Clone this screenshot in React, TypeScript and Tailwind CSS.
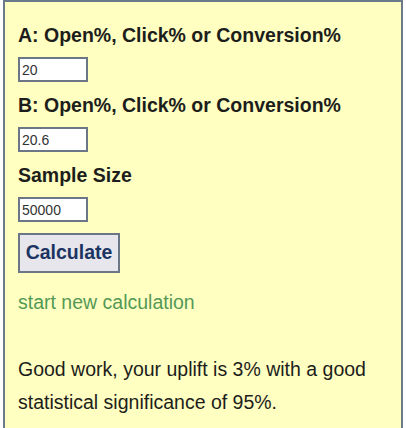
import { useState } from 'react';

const labelCls = 'block text-[19.5px] leading-[22px] font-bold text-[#1d1d1b]';
const inputCls =
  'block w-[70px] h-[25px] border-2 border-[#6b7787] bg-white px-[2px] text-[14px] leading-[21px] text-[#333] outline-none';

export default function App() {
  const [a, setA] = useState('20');
  const [b, setB] = useState('20.6');
  const [size, setSize] = useState('50000');

  return (
    <div className="min-h-screen bg-white px-[3px] font-['Liberation_Sans',Arial,sans-serif]">
      <div className="h-[440px] border-2 border-[#6d7a8c] bg-[#ffffc2] px-[13px] pt-[22px]">
        <label className={labelCls}>A: Open%, Click% or Conversion%</label>
        <input className={`${inputCls} mt-[11px]`} value={a} onChange={(e) => setA(e.target.value)} />

        <label className={`${labelCls} mt-[12px]`}>B: Open%, Click% or Conversion%</label>
        <input className={`${inputCls} mt-[11px]`} value={b} onChange={(e) => setB(e.target.value)} />

        <label className={`${labelCls} mt-[12px]`}>Sample Size</label>
        <input className={`${inputCls} mt-[11px]`} value={size} onChange={(e) => setSize(e.target.value)} />

        <button className="mt-[11px] block h-[40px] w-[102px] border-2 border-[#6b7787] bg-[#e6e6ec] text-[19.5px] font-bold text-[#1c3461]">
          Calculate
        </button>

        <a href="#" className="mt-[18px] block text-[19.5px] leading-[22px] text-[#559955]">
          start new calculation
        </a>

        <p className="mt-[40px] text-[19.5px] leading-[33px] text-[#1d1d1b]">
          Good work, your uplift is 3% with a good statistical significance of 95%.
        </p>
      </div>
    </div>
  );
}
